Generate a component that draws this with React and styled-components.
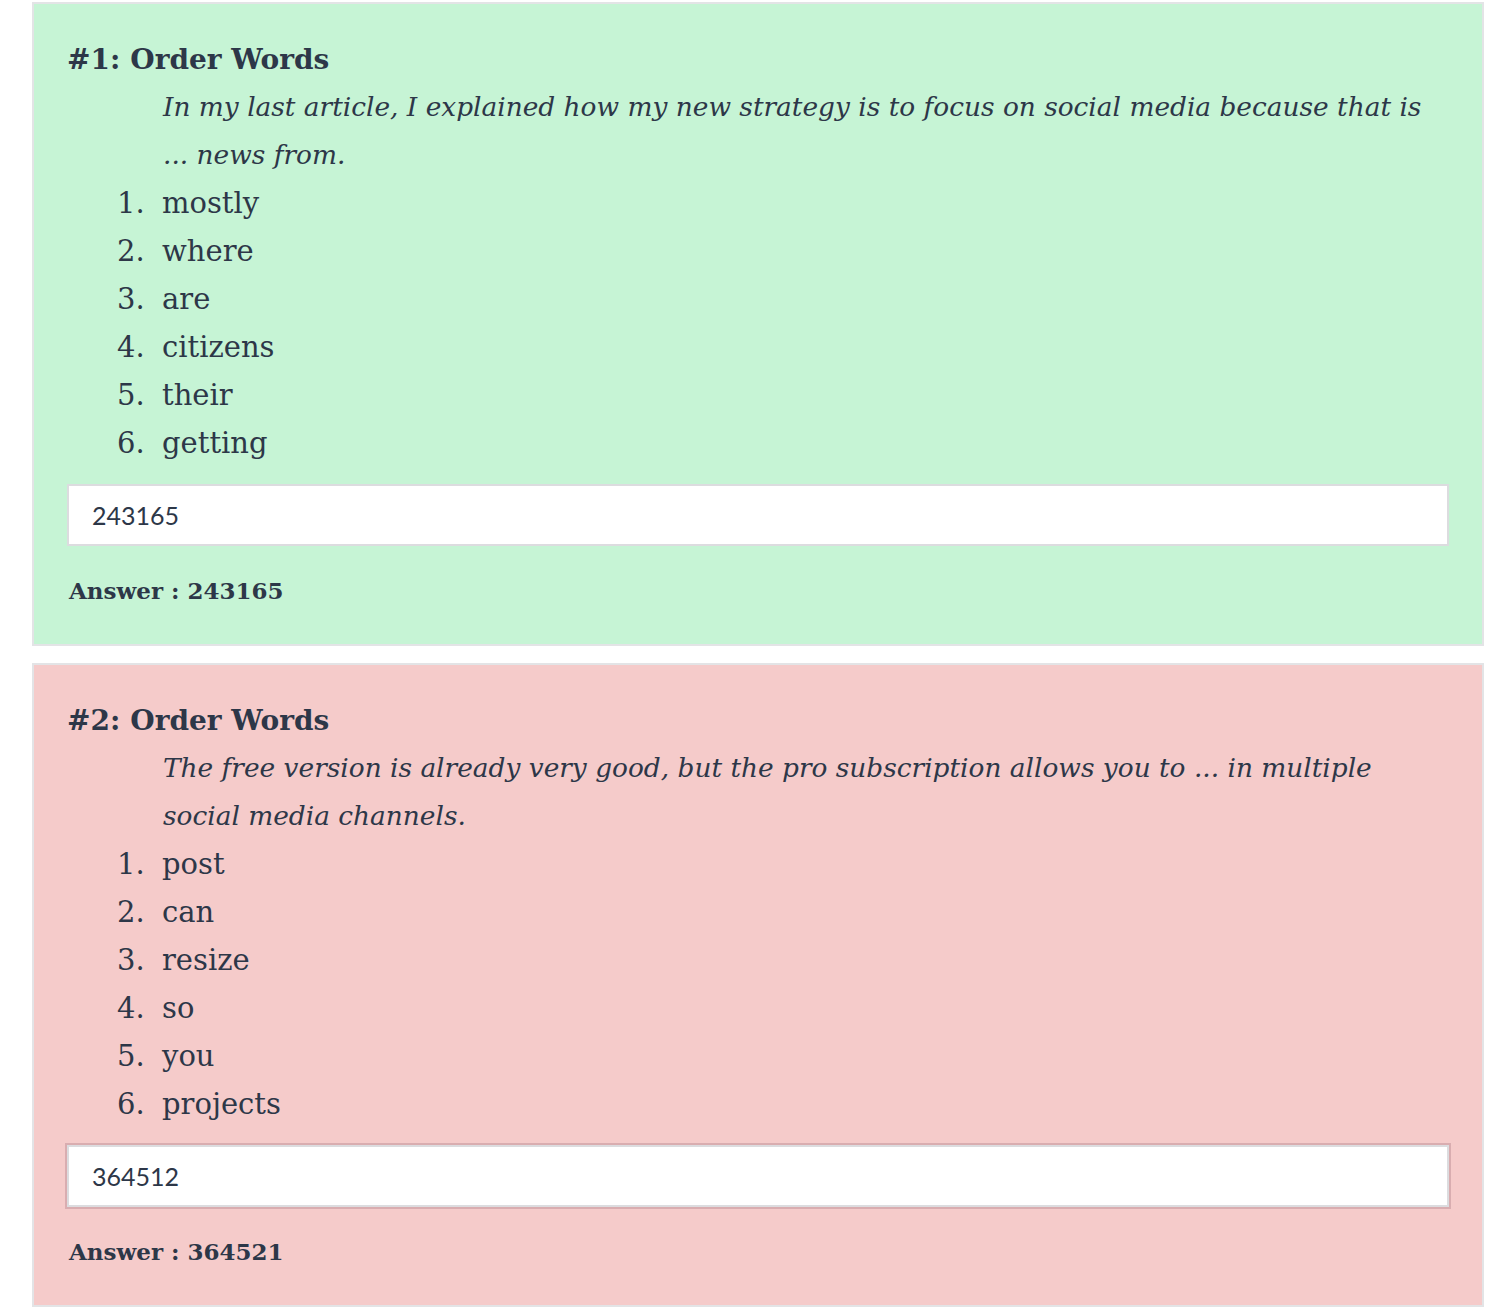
import React from 'react';
import styled, { createGlobalStyle } from 'styled-components';

const GlobalStyle = createGlobalStyle`
  body {
    margin: 0;
    background: #ffffff;
    font-family: "DejaVu Serif", "Liberation Serif", serif;
    color: #2d3748;
  }
`;

const Page = styled.div`
  display: flex;
  flex-direction: column;
  gap: 17px;
  padding: 2px 26px 0 32px;
`;

const Card = styled.div`
  background: ${(p) => (p.correct ? '#c6f4d5' : '#f5cbca')};
  border: 2px solid #e3e4e6;
  padding: 35px 33px 33px 33px;
`;

const Title = styled.h3`
  margin: 0;
  font-size: 28px;
  font-weight: bold;
  line-height: 42px;

  span {
    margin-right: 10px;
  }
`;

const Question = styled.p`
  margin: 2px 0 0 96px;
  font-size: 26.4px;
  font-style: italic;
  line-height: 48px;
`;

const WordList = styled.ol`
  margin: 0;
  padding-left: 87px;
  font-size: 29px;
  line-height: 48px;

  li {
    padding-left: 8px;
  }
`;

const AnswerInput = styled.input`
  display: block;
  box-sizing: border-box;
  width: 100%;
  height: 62px;
  margin-top: 17px;
  padding: 0 23px;
  border: 2px solid #dcdcdf;
  background: #ffffff;
  font-family: Lato, "Noto Sans", sans-serif;
  font-size: 25px;
  color: #2d3748;
  outline: none;
  box-shadow: ${(p) => (p.wrong ? '0 0 0 2px #d9adb0' : 'none')};
`;

const Answer = styled.div`
  margin: 25px 0 0 2px;
  font-size: 23px;
  font-weight: bold;
  line-height: 40px;
`;

const questions = [
  {
    id: 1,
    text: 'In my last article, I explained how my new strategy is to focus on social media because that is ... news from.',
    words: ['mostly', 'where', 'are', 'citizens', 'their', 'getting'],
    given: '243165',
    answer: '243165',
  },
  {
    id: 2,
    text: 'The free version is already very good, but the pro subscription allows you to ... in multiple social media channels.',
    words: ['post', 'can', 'resize', 'so', 'you', 'projects'],
    given: '364512',
    answer: '364521',
  },
];

export default function App() {
  return (
    <>
      <GlobalStyle />
      <Page>
        {questions.map((q) => {
          const correct = q.given === q.answer;
          return (
            <Card key={q.id} correct={correct}>
              <Title>
                <span>#{q.id}:</span>Order Words
              </Title>
              <Question>{q.text}</Question>
              <WordList>
                {q.words.map((w, i) => (
                  <li key={i}>{w}</li>
                ))}
              </WordList>
              <AnswerInput defaultValue={q.given} wrong={!correct} readOnly />
              <Answer>Answer : {q.answer}</Answer>
            </Card>
          );
        })}
      </Page>
    </>
  );
}
